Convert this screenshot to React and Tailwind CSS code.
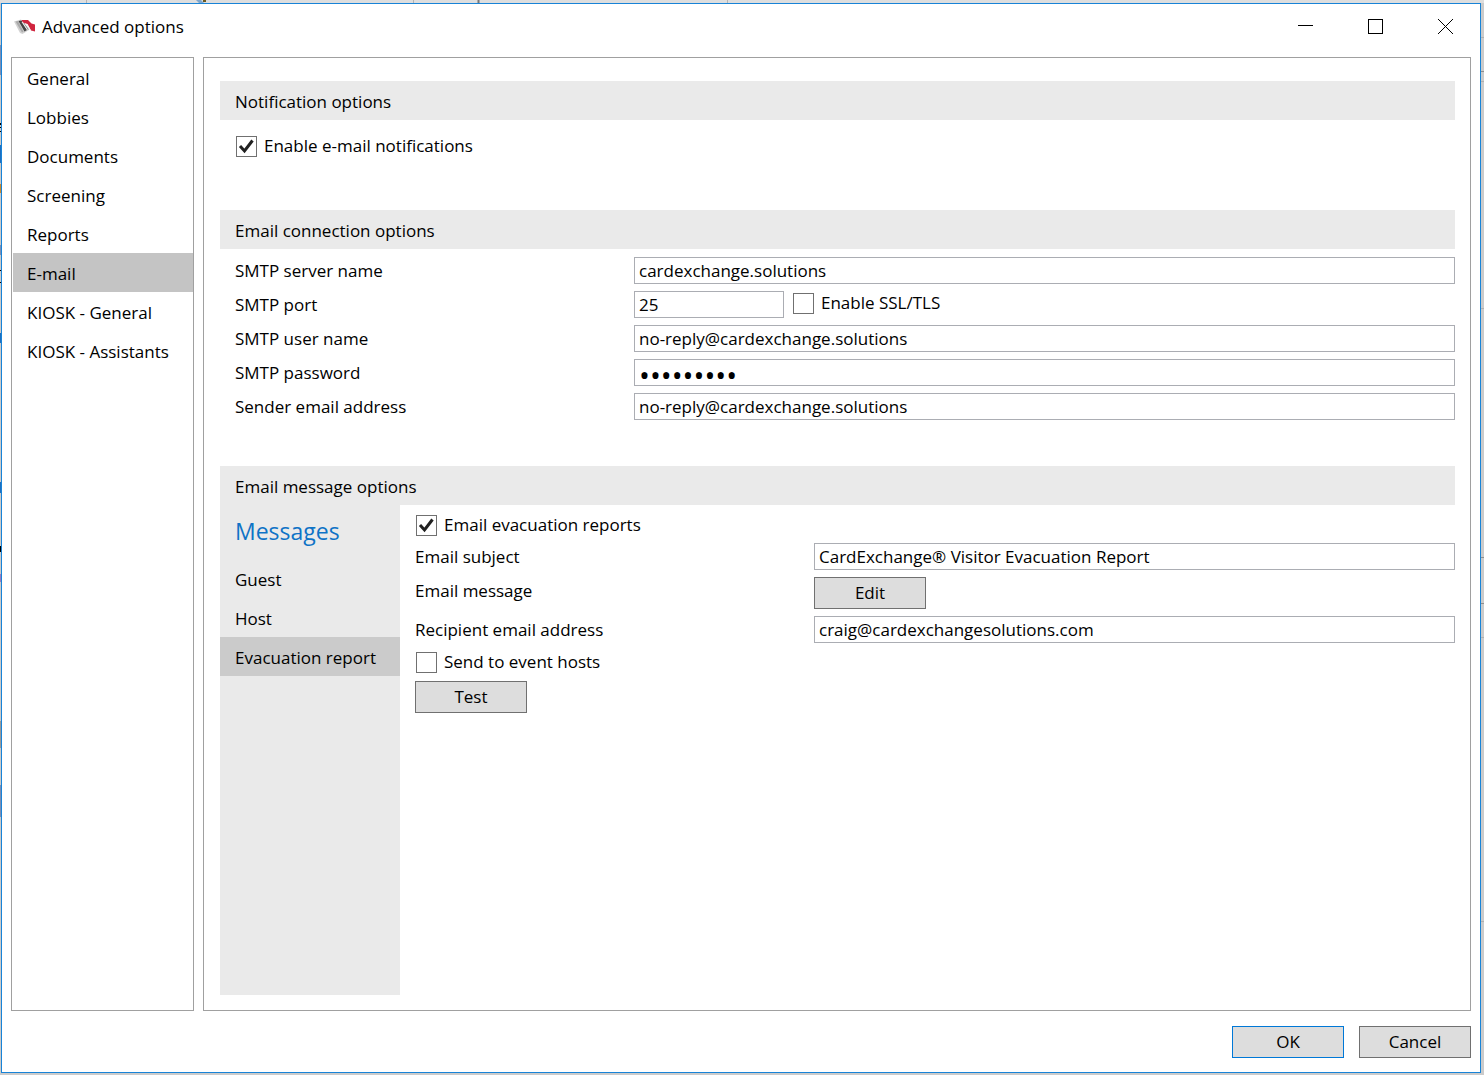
import React, { useState } from 'react';

const PAGES = ['General', 'Lobbies', 'Documents', 'Screening', 'Reports', 'E-mail', 'KIOSK - General', 'KIOSK - Assistants'];
const MESSAGES = ['Guest', 'Host', 'Evacuation report'];

// Slivers of the application window that show around the dialog
function Backdrop() {
  return (
    <svg className="absolute inset-0 -z-10 h-full w-full" aria-hidden="true">
      <rect width="100%" height="3" fill="#dedede" />
      <path d="M86.5 0 V3 M413.5 0 V3 M727.5 0 V3" stroke="#b4b4b4" />
      <path d="M478.5 0 V3" stroke="#777" strokeWidth="2" />
      <path d="M196 0 H201 L204 3 H199 Z" fill="#7fa6cc" />
      <rect x="203" width="3" height="2" fill="#6b5a20" />
      <path d="M0.5 45 V75 M0.5 245 V255 M0.5 785 V817" stroke="#7b8fb5" />
      <path d="M0.5 123 V125 M0.5 127 V128 M0.5 131 V132 M0.5 270 V271 M0.5 282 V283 M0.5 546 V552" stroke="#000" />
      <path d="M0.5 145 V163 M0.5 333 V343 M0.5 482 V493" stroke="#1c6fc0" />
      <path d="M0.5 184 V193" stroke="#c98a2e" />
      <path d="M0.5 574 V582" stroke="#9a7cc0" />
      <path d="M0.5 721 V748" stroke="#9a9a9a" />
      <path d="M1481 71.5 H1484 M1481 557.5 H1484 M1481 603.5 H1484" stroke="#8e8e8e" />
      <path d="M1481 37.5 H1484 M1481 81.5 H1484 M1481 308.5 H1484 M1481 637.5 H1484 M1481 921.5 H1484" stroke="#b0b0b0" />
    </svg>
  );
}

function AppLogo() {
  return (
    <svg width="22" height="16" viewBox="0 0 22 16" aria-hidden="true">
      <path d="M0 2.5 L7 0.5 L15 11 L8.5 15 L6 14 Z" fill="#d2d2d2" />
      <path d="M1.5 2.5 L4 2 L9.5 12.5 L8 13.5 Z" fill="#aaa" />
      <path d="M4.5 2 L7.5 1.5 L13 11 L10.5 12.5 Z" fill="#444" />
      <path d="M7.5 3 L9.5 3 L14 10.5 L13 11 Z" fill="#f2f2f2" />
      <path d="M9.5 4 L10.5 4 L15 10 L14 11 Z" fill="#888" />
      <path d="M7.5 1 L14 1 L17.5 4.5 L21 5.5 V12.5 L17 11.5 L13.5 5 L9 3.5 Z" fill="#d0253f" />
      <path d="M10.5 4.5 L13.5 5.5 L17 11.5 L15.5 11 Z" fill="#f2f2f2" />
    </svg>
  );
}

function CheckBox({ label, defaultChecked }) {
  return (
    <label className="flex items-center gap-[7px]">
      <span className="grid h-[21px] w-[21px] shrink-0">
        <input
          type="checkbox"
          defaultChecked={defaultChecked}
          className="peer col-start-1 row-start-1 h-[21px] w-[21px] appearance-none border border-[#707070] bg-white"
        />
        <svg viewBox="0 0 21 21" className="pointer-events-none invisible col-start-1 row-start-1 peer-checked:visible" aria-hidden="true">
          <path d="M4 10 L8.5 15 L16.5 4.5" fill="none" stroke="#212121" strokeWidth="3" />
        </svg>
      </span>
      {label}
    </label>
  );
}

function SectionHeader({ children }) {
  return <h2 className="flex h-[39px] items-center bg-[#eaeaea] px-[15px] pt-[2px]">{children}</h2>;
}

function Field({ id, label, type = 'text', value, narrow, children }) {
  return (
    <div className="flex h-[27px]">
      <label htmlFor={id} className="w-[399px] shrink-0 leading-7">{label}</label>
      <input
        id={id}
        type={type}
        defaultValue={value}
        className={`h-[27px] border border-[#abadb3] bg-white px-1 ${narrow ? 'w-[150px]' : 'min-w-0 flex-1'} ${type === 'password' ? 'pt-1 text-[29px]' : ''}`}
      />
      {children}
    </div>
  );
}

function PushButton({ children, primary }) {
  return (
    <button className={`h-8 w-28 border bg-[#dddddd] ${primary ? 'border-[#0078d7]' : 'border-[#707070]'}`}>
      {children}
    </button>
  );
}

export default function App() {
  const [page, setPage] = useState('E-mail');
  const [message, setMessage] = useState('Evacuation report');

  return (
    <div className="relative isolate flex min-h-screen bg-[#cbcbcb] pt-[3px] pr-[3px] pb-[2px] pl-px font-['Open_Sans',sans-serif] text-[17px] leading-6 text-black">
      <Backdrop />
      <div className="flex flex-1 flex-col border border-[#1883d7] bg-white">
        <header className="flex h-[53px] items-start justify-between">
          <div className="flex items-center gap-[6px] pt-[11px] pl-3">
            <AppLogo />
            <h1>Advanced options</h1>
          </div>
          <div className="flex">
            <button aria-label="Minimize" className="grid h-11 w-[70px] place-items-center">
              <svg width="15" height="15" viewBox="0 0 15 15"><path d="M0 6.5 H15" stroke="#000" /></svg>
            </button>
            <button aria-label="Maximize" className="grid h-11 w-[70px] place-items-center">
              <svg width="15" height="15" viewBox="0 0 15 15"><rect x="0.5" y="0.5" width="14" height="14" fill="none" stroke="#000" /></svg>
            </button>
            <button aria-label="Close" className="grid h-11 w-[70px] place-items-center">
              <svg width="15" height="15" viewBox="0 0 15 15"><path d="M0 0 L15 15 M15 0 L0 15" stroke="#000" /></svg>
            </button>
          </div>
        </header>

        <div className="flex flex-1 gap-[9px] pr-[9px] pl-[9px]">
          <nav className="flex w-[183px] shrink-0 flex-col border border-[#a0a0a0] pl-px">
            {PAGES.map(name => (
              <button
                key={name}
                onClick={() => setPage(name)}
                className={`h-[39px] shrink-0 pt-[2px] pl-[14px] text-left ${page === name ? 'bg-[#c4c4c4]' : ''}`}
              >
                {name}
              </button>
            ))}
          </nav>

          <main className="flex min-w-0 flex-1 flex-col border border-[#a0a0a0] pt-[23px] pr-[15px] pb-[15px] pl-4">
            <section className="h-[129px]">
              <SectionHeader>Notification options</SectionHeader>
              <div className="px-4 pt-[14px]">
                <CheckBox label="Enable e-mail notifications" defaultChecked />
              </div>
            </section>

            <section className="h-[256px]">
              <SectionHeader>Email connection options</SectionHeader>
              <div className="flex flex-col gap-[7px] pt-2 pl-[15px]">
                <Field id="server" label="SMTP server name" value="cardexchange.solutions" />
                <Field id="port" label="SMTP port" value="25" narrow>
                  <div className="pl-[9px]"><CheckBox label="Enable SSL/TLS" /></div>
                </Field>
                <Field id="user" label="SMTP user name" value="no-reply@cardexchange.solutions" />
                <Field id="password" label="SMTP password" type="password" value="password1" />
                <Field id="sender" label="Sender email address" value="no-reply@cardexchange.solutions" />
              </div>
            </section>

            <section className="flex flex-1 flex-col">
              <SectionHeader>Email message options</SectionHeader>
              <div className="flex flex-1">
                <div className="flex w-[180px] shrink-0 flex-col bg-[#eaeaea]">
                  <h3 className="h-[54px] pt-[10px] pl-[15px] text-[23px] leading-8 text-[#0f73c6]">Messages</h3>
                  {MESSAGES.map(name => (
                    <button
                      key={name}
                      onClick={() => setMessage(name)}
                      className={`h-[39px] shrink-0 pt-[2px] pl-[15px] text-left ${message === name ? 'bg-[#cbcbcb]' : ''}`}
                    >
                      {name}
                    </button>
                  ))}
                </div>
                <div className="min-w-0 flex-1 pt-2 pl-[15px]">
                  <div className="h-[30px] pl-px"><CheckBox label="Email evacuation reports" defaultChecked /></div>
                  <div className="flex flex-col gap-[7px]">
                    <Field id="subject" label="Email subject" value="CardExchange® Visitor Evacuation Report" />
                    <div className="flex">
                      <span className="w-[399px] shrink-0 leading-7">Email message</span>
                      <PushButton>Edit</PushButton>
                    </div>
                    <Field id="recipient" label="Recipient email address" value="craig@cardexchangesolutions.com" />
                  </div>
                  <div className="h-[31px] pt-[7px] pl-px"><CheckBox label="Send to event hosts" /></div>
                  <div className="pt-[7px]"><PushButton>Test</PushButton></div>
                </div>
              </div>
            </section>
          </main>
        </div>

        <footer className="flex justify-end gap-[15px] pt-[15px] pr-[9px] pb-[14px]">
          <PushButton primary>OK</PushButton>
          <PushButton>Cancel</PushButton>
        </footer>
      </div>
    </div>
  );
}
